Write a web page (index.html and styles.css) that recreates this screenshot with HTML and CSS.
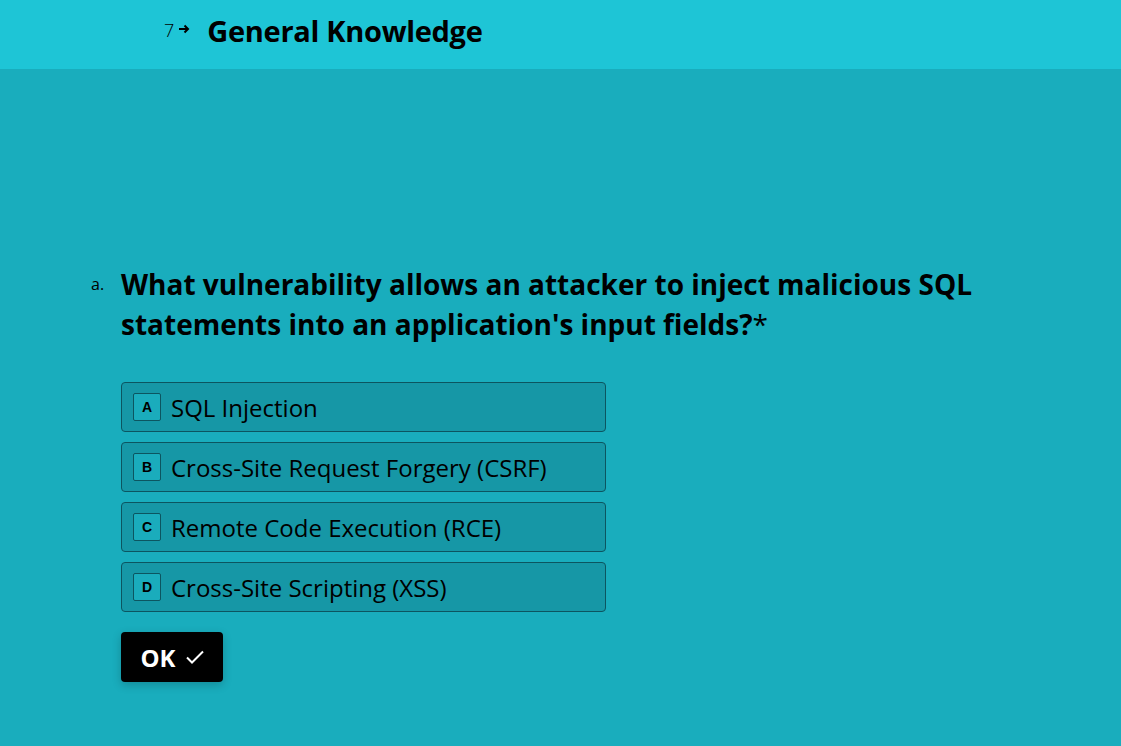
FILE: index.html
```html
<!DOCTYPE html>
<html>
<head>
<meta charset="utf-8">
<link rel="stylesheet" href="styles.css">
</head>
<body>
<header class="topbar">
  <div class="crumb">
    <span class="num">7</span>
    <svg class="arrow" width="12" height="12" viewBox="0 0 12 12"><path d="M1 6h9M6.5 2.5L10 6l-3.5 3.5" fill="none" stroke="#000" stroke-width="2"/></svg>
    <h1 class="title">General Knowledge</h1>
  </div>
</header>
<main class="content">
  <div class="question">
    <span class="qlabel">a.</span>
    <div class="qbody">
      <h2 class="qtext">What vulnerability allows an attacker to inject malicious SQL statements into an application's input fields?<span class="req">*</span></h2>
      <ul class="options">
        <li class="option"><span class="key">A</span><span class="otext">SQL Injection</span></li>
        <li class="option"><span class="key">B</span><span class="otext">Cross-Site Request Forgery (CSRF)</span></li>
        <li class="option"><span class="key">C</span><span class="otext">Remote Code Execution (RCE)</span></li>
        <li class="option"><span class="key">D</span><span class="otext">Cross-Site Scripting (XSS)</span></li>
      </ul>
      <button class="ok">OK <svg width="22" height="22" viewBox="0 0 22 22"><path d="M3 11.5l5 5L19 5.5" fill="none" stroke="#fff" stroke-width="2"/></svg></button>
    </div>
  </div>
</main>
</body>
</html>
```
FILE: styles.css
```css
* { box-sizing: border-box; }
html, body { margin: 0; padding: 0; }
body {
  font-family: "Open Sans", "Noto Sans", sans-serif;
  background: #19adbd;
  color: #000;
  height: 746px;
  overflow: hidden;
}
.topbar {
  height: 69px;
  background: #1ec5d6;
  display: flex;
  align-items: center;
  padding-left: 164px;
  padding-bottom: 8px;
}
.crumb { display: flex; align-items: center; }
.num { font-size: 18px; font-weight: 300; margin-right: 4px; margin-top: -2px; }
.arrow { margin-top: -4px; margin-right: 17px; }
.title {
  margin: 0;
  font-size: 29px;
  font-weight: 700;
  letter-spacing: -0.3px;
}
.content { padding: 195px 0 0 91px; }
.question { display: flex; }
.qlabel { width: 30px; font-size: 16px; padding-top: 9px; }
.qbody { width: 900px; }
.qtext {
  margin: 0;
  font-size: 28px;
  line-height: 40px;
  font-weight: 700;
}
.req { font-weight: 400; }
.options {
  list-style: none;
  margin: 38px 0 0;
  padding: 0;
  display: flex;
  flex-direction: column;
  gap: 10px;
}
.option {
  width: 485px;
  height: 50px;
  background: #1697a6;
  border: 1px solid #0c5560;
  border-radius: 4px;
  display: flex;
  align-items: center;
  padding-left: 11px;
}
.key {
  width: 28px;
  height: 28px;
  border: 1px solid #0c5560;
  border-radius: 2px;
  background: #1aacbc;
  display: flex;
  align-items: center;
  justify-content: center;
  font-size: 14px;
  font-weight: 700;
  font-family: "Liberation Sans", Arial, sans-serif;
  margin-right: 10px;
}
.otext { font-size: 24px; }
.ok {
  margin-top: 20px;
  width: 102px;
  height: 50px;
  background: #000;
  color: #fff;
  border: none;
  border-radius: 4px;
  font-family: inherit;
  font-size: 24px;
  font-weight: 700;
  display: flex;
  align-items: center;
  justify-content: center;
  gap: 8px;
  box-shadow: 0 3px 10px rgba(0,0,0,0.2);
  padding: 0 0 0 2px;
}
```
